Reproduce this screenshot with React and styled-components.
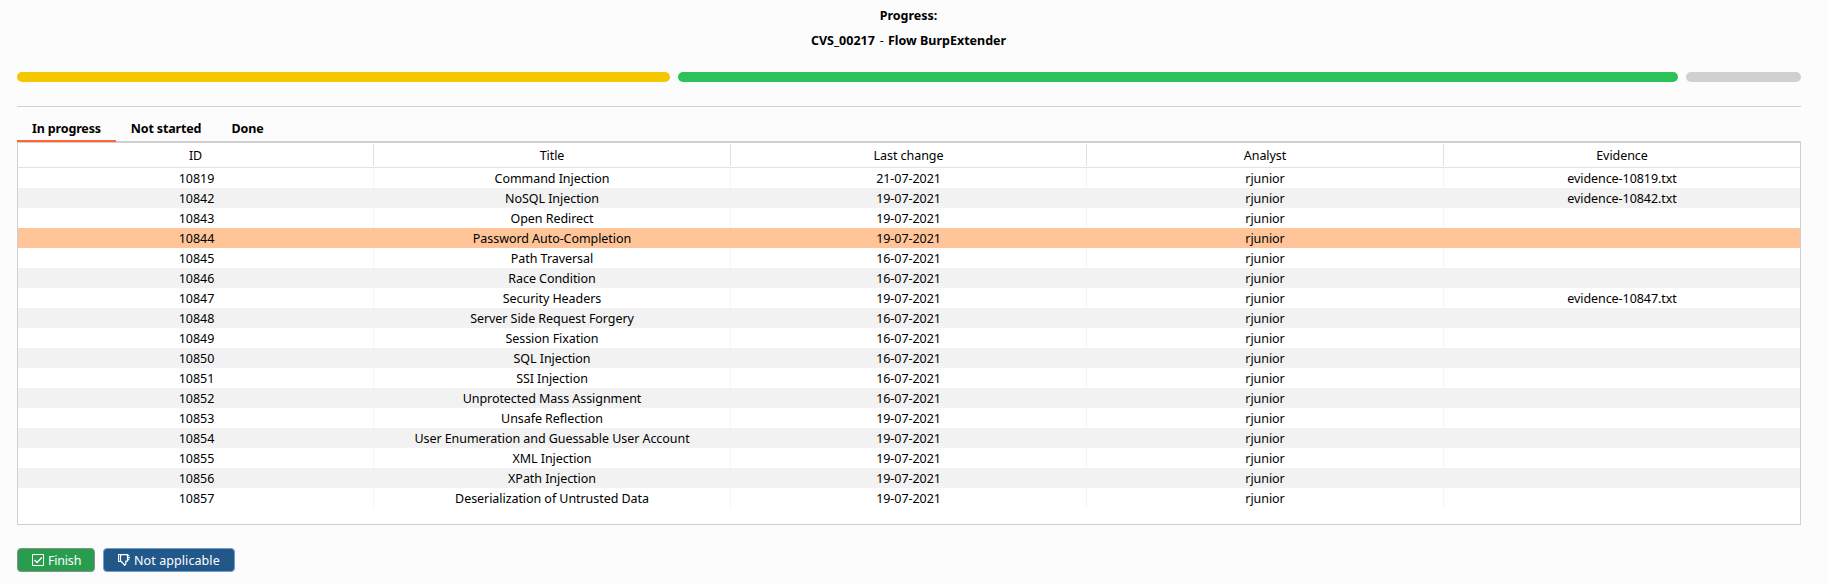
import React from "react";
import styled, { createGlobalStyle } from "styled-components";

const Global = createGlobalStyle`
  * { box-sizing: border-box; }
  body { margin: 0; background: #fcfcfc; color: #000; font: 12.5px/20px "Noto Sans", "Open Sans", sans-serif; letter-spacing: -0.06px; }
`;
const Page = styled.main`
  height: 584px; padding: 0 27px 0 17px; display: flex; flex-direction: column; overflow: hidden;
`;
const Heading = styled.header`
  height: 72px; padding-top: 3px; text-align: center; font-weight: 700; font-size: 12.5px; line-height: 25px;
  letter-spacing: 0;
`;
const Line = styled.div`height: 25px; padding-right: 1px;`;
const Dash = styled.span`margin: 0 4px 0 5px; font-weight: 400;`;
const Progress = styled.div`
  display: grid; grid-template-columns: 653px 1000px 115px; gap: 8px; height: 10px;
`;
const Segment = styled.div`border-radius: 5px; background: ${(p) => p.$color};`;
const Rule = styled.div`height: 1px; margin-top: 24px; background: #d0d0d0;`;
const Tabs = styled.nav`
  display: flex; height: 36px; border-bottom: 2px solid #d0d0d0;
`;
const Tab = styled.div`
  width: ${(p) => p.$width}px; height: 35px; padding-top: 12px; text-align: center; font-weight: 700;
  font-size: 12.5px; line-height: 20px; letter-spacing: -0.15px;
  border-bottom: 2px solid ${(p) => (p.$active ? "#ff6633" : "transparent")};
`;
const Table = styled.section`
  height: 382px; background: #fff; border: 1px solid #d0d0d0; border-top: 0;
`;
const HeadRow = styled.div`
  display: grid; grid-template-columns: 356px 357px 356px 357px 1fr; height: 25px; padding: 1px 0;
  border-bottom: 1px solid #e3e3e3;
`;
const HeadCell = styled.div`
  height: 22px; line-height: 24px; text-align: center; border-right: 1px solid #e0e0e0; white-space: nowrap;
  &:last-child { border-right: 0; }
`;
const Row = styled.div`
  display: grid; grid-template-columns: 356px 357px 356px 357px 1fr; height: 20px;
  background: ${(p) => (p.$selected ? "#ffc599" : p.$striped ? "#f2f2f2" : "#fff")};
`;
const Cell = styled.div`
  height: 20px; line-height: 22px; text-align: center; white-space: nowrap;
  border-right: 1px solid ${(p) => (p.$plain ? "#f5f5f5" : "transparent")};
  &:first-child { padding-left: 2px; }
  &:last-child { border-right: 0; }
`;
const Actions = styled.footer`display: flex; gap: 8px; margin-top: 23px;`;
const Button = styled.button`
  display: flex; align-items: center; gap: 4px; width: ${(p) => p.$width}px; height: 24px; padding: 0 0 0 14px;
  border: 1px solid ${(p) => p.$edge}; border-radius: 4px; background: ${(p) => p.$color};
  color: #fff; font: inherit; letter-spacing: ${(p) => p.$tracking}px; white-space: nowrap;
`;
const Label = styled.span`padding-top: 2px;`;
const Icon = styled.svg`display: block; width: 12px; height: 12px; flex: none;`;

const rows = [
  ["10819", "Command Injection", "21-07-2021", "evidence-10819.txt"],
  ["10842", "NoSQL Injection", "19-07-2021", "evidence-10842.txt"],
  ["10843", "Open Redirect", "19-07-2021", ""],
  ["10844", "Password Auto-Completion", "19-07-2021", ""],
  ["10845", "Path Traversal", "16-07-2021", ""],
  ["10846", "Race Condition", "16-07-2021", ""],
  ["10847", "Security Headers", "19-07-2021", "evidence-10847.txt"],
  ["10848", "Server Side Request Forgery", "16-07-2021", ""],
  ["10849", "Session Fixation", "16-07-2021", ""],
  ["10850", "SQL Injection", "16-07-2021", ""],
  ["10851", "SSI Injection", "16-07-2021", ""],
  ["10852", "Unprotected Mass Assignment", "16-07-2021", ""],
  ["10853", "Unsafe Reflection", "19-07-2021", ""],
  ["10854", "User Enumeration and Guessable User Account", "19-07-2021", ""],
  ["10855", "XML Injection", "19-07-2021", ""],
  ["10856", "XPath Injection", "19-07-2021", ""],
  ["10857", "Deserialization of Untrusted Data", "19-07-2021", ""],
];

export default function App() {
  return (
    <Page>
      <Global />
      <Heading>
        <Line>Progress:</Line>
        <Line>CVS_00217<Dash>-</Dash>Flow BurpExtender</Line>
      </Heading>
      <Progress>
        <Segment $color="#f4c700" />
        <Segment $color="#2dc258" />
        <Segment $color="#d0d0d0" />
      </Progress>
      <Rule />
      <Tabs>
        <Tab $width={99} $active>In progress</Tab>
        <Tab $width={100}>Not started</Tab>
        <Tab $width={63}>Done</Tab>
      </Tabs>
      <Table>
        <HeadRow>
          {["ID", "Title", "Last change", "Analyst", "Evidence"].map((h) => <HeadCell key={h}>{h}</HeadCell>)}
        </HeadRow>
        {rows.map(([id, title, date, file], i) => {
          const selected = id === "10844";
          const striped = i % 2 === 1;
          return (
            <Row key={id} $selected={selected} $striped={striped}>
              {[id, title, date, "rjunior", file].map((v, c) => <Cell key={c} $plain={!striped}>{v}</Cell>)}
            </Row>
          );
        })}
      </Table>
      <Actions>
        <Button $width={78} $color="#289d4e" $edge="#8a8f8c" $tracking={-0.2}>
          <Icon viewBox="0 0 12 12" fill="none" stroke="#fff">
            <path d="M.5 .5H11.5V11.5H.5Z" />
            <path d="M2.5 6L5 8.5L9.8 3.5" strokeWidth="1.3" />
          </Icon>
          <Label>Finish</Label>
        </Button>
        <Button $width={132} $color="#225789" $edge="#6f9fd0" $tracking={0.08}>
          <Icon viewBox="0 0 12 12" fill="none" stroke="#fff" strokeWidth="1.2">
            <path d="M.5 .5H2.5V7.5H.5Z" />
            <path d="M2.5 1.5L4 .7H9.5V7.2H7.8V10L6.5 11.5L5.3 9.5L2.5 7" />
            <path d="M9 1.5H11.3M9 3.6H12M9 5.6H11.3" strokeWidth="1.4" />
          </Icon>
          <Label>Not applicable</Label>
        </Button>
      </Actions>
    </Page>
  );
}
